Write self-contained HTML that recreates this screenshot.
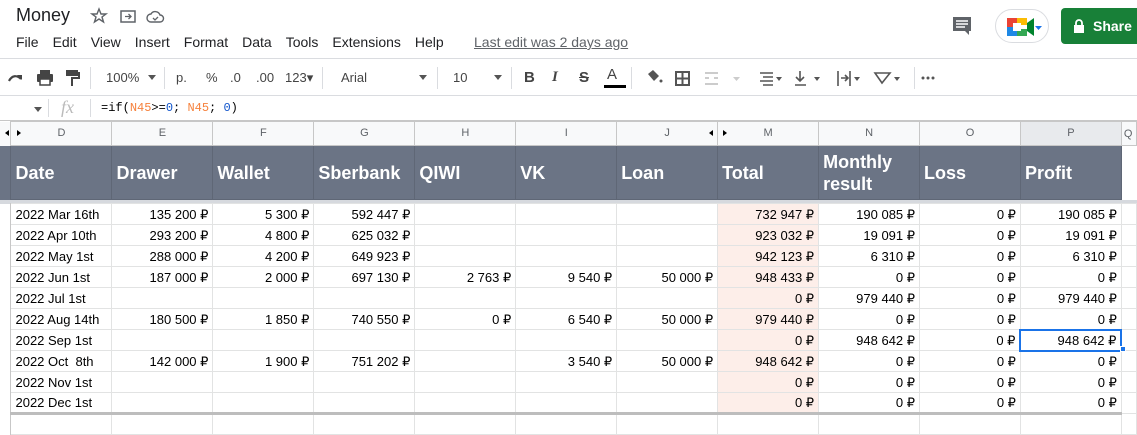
<!DOCTYPE html>
<html><head><meta charset="utf-8"><style>
*{margin:0;padding:0;box-sizing:border-box}
body{width:1137px;height:435px;overflow:hidden;background:#fff;font-family:"Liberation Sans",Arial,sans-serif;position:relative;color:#202124}
.a{position:absolute;white-space:nowrap}
.menu span{margin-right:14px}
.tb{font-size:13px;color:#444}
.sep{position:absolute;width:1px;height:22px;background:#dadce0;top:67px}
table{position:absolute;left:0;top:121px;border-collapse:collapse;table-layout:fixed}
td{border:1px solid #e2e3e3;height:21px;font-size:13px;color:#000;padding:0 4px 1px;overflow:hidden;white-space:nowrap;text-align:right;vertical-align:bottom;line-height:16px}
td.l{text-align:left}
tr.ch td{height:24px;background:#f8f9fa;border-color:#c7c7c7;color:#5f6368;font-size:11px;text-align:center;vertical-align:middle}
tr.hd td{height:54px;background:#6b7485;border-color:#5f6776;color:#fff;font-weight:bold;font-size:18px;text-align:left;padding:0 4px;white-space:normal;line-height:22px;vertical-align:middle}
tr.sp td{height:4px;background:#d6d9de;border:none;padding:0}
td.t{background:#fdeee9}
td.rh{border:none;border-right:1px solid #c7c7c7;padding:0;background:#fff}
tr.ch td.rh{background:#f8f9fa}
tr.last td{border-bottom:3px solid #bdbdbd}
</style></head><body>
<div class="a" style="left:16px;top:5px;font-size:18px;color:#202124">Money</div>
<svg class="a" style="left:90px;top:7px" width="80" height="18" viewBox="0 0 80 18"><path d="M9 2l2 5h5l-4 3 1.5 5L9 12l-4.5 3L6 10 2 7h5z" fill="none" stroke="#5f6368" stroke-width="1.4"/><rect x="31" y="4" width="14" height="11" fill="none" stroke="#5f6368" stroke-width="1.5"/><path d="M35 9.5h6M38.5 7l2.5 2.5-2.5 2.5" stroke="#5f6368" fill="none" stroke-width="1.3"/><path d="M61 15a4 4 0 0 1 0-8 5 5 0 0 1 9 1 3.5 3.5 0 0 1 0 7z" fill="none" stroke="#5f6368" stroke-width="1.4"/><path d="M63 11l2 2 3-3" stroke="#5f6368" fill="none" stroke-width="1.3"/></svg>
<div class="a menu" style="left:16px;top:34px;font-size:14px;color:#202124"><span>File</span><span>Edit</span><span>View</span><span>Insert</span><span>Format</span><span>Data</span><span>Tools</span><span>Extensions</span><span>Help</span></div>
<div class="a" style="left:474px;top:34px;font-size:14px;color:#5f6368;text-decoration:underline">Last edit was 2 days ago</div>
<svg class="a" style="left:951px;top:15px" width="22" height="22"><path d="M2 2h18v14h-2v4l-4-4H2z" fill="#5f6368"/><path d="M5 6h12M5 9h12M5 12h9" stroke="#fff" stroke-width="1.4"/></svg>
<div class="a" style="left:995px;top:9px;width:54px;height:34px;border:1px solid #dadce0;border-radius:17px"></div>
<svg class="a" style="left:1005px;top:16px" width="40" height="22"><rect x="2" y="2" width="10" height="9" fill="#ea4335"/><rect x="2" y="11" width="10" height="9" fill="#1e88e5"/><rect x="12" y="2" width="10" height="7" fill="#fbbc04"/><rect x="12" y="13" width="10" height="7" fill="#34a853"/><rect x="8" y="7" width="8" height="8" fill="#fff"/><path d="M22 7l7-5v18l-7-5z" fill="#00832d"/><path d="M30 10h7l-3.5 4z" fill="#1a73e8"/></svg>
<div class="a" style="left:1061px;top:8px;width:90px;height:36px;background:#188038;border-radius:4px;color:#fff;font-weight:bold;font-size:14px;line-height:36px;padding-left:32px">Share</div>
<svg class="a" style="left:1073px;top:19px" width="12" height="14"><rect x="1" y="6" width="10" height="8" fill="#fff"/><path d="M3 6V4a3 3 0 0 1 6 0v2" stroke="#fff" stroke-width="1.8" fill="none"/></svg>
<div class="a" style="left:0;top:58px;width:1137px;height:1px;background:#dadce0"></div>
<svg class="a" style="left:6px;top:68px" width="74" height="20"><path d="M3 13c3-6 8-6 12-2" fill="none" stroke="#444" stroke-width="2.2"/><path d="M11 7h5v5z" fill="#444"/><rect x="31" y="6" width="16" height="8" rx="1" fill="#444"/><rect x="34" y="2" width="10" height="4" fill="#444"/><rect x="34" y="11" width="10" height="6" fill="#fff" stroke="#444" stroke-width="1.5"/><rect x="60" y="2" width="12" height="6" fill="#444"/><path d="M72 5h1v5h-7v8" stroke="#444" stroke-width="2" fill="none"/></svg>
<div class="sep" style="left:90px"></div>
<div class="a tb" style="left:106px;top:70px">100%</div><div class="a" style="left:148px;top:75px;border:4px solid transparent;border-top:5px solid #555"></div>
<div class="sep" style="left:164px"></div>
<div class="a tb" style="left:176px;top:70px">p.</div>
<div class="a tb" style="left:206px;top:70px">%</div>
<div class="a tb" style="left:230px;top:70px">.0</div>
<div class="a tb" style="left:256px;top:70px">.00</div>
<div class="a tb" style="left:285px;top:70px">123▾</div>
<div class="sep" style="left:322px"></div>
<div class="a tb" style="left:341px;top:70px">Arial</div><div class="a" style="left:419px;top:75px;border:4px solid transparent;border-top:5px solid #555"></div>
<div class="sep" style="left:437px"></div>
<div class="a tb" style="left:453px;top:70px">10</div><div class="a" style="left:494px;top:75px;border:4px solid transparent;border-top:5px solid #555"></div>
<div class="sep" style="left:511px"></div>
<div class="a" style="left:524px;top:69px;font-size:15px;font-weight:bold;color:#444">B</div>
<div class="a" style="left:552px;top:69px;font-size:15px;font-style:italic;font-weight:bold;color:#444;font-family:'Liberation Serif',serif">I</div>
<div class="a" style="left:579px;top:69px;font-size:15px;font-weight:bold;color:#444;text-decoration:line-through">S</div>
<div class="a" style="left:607px;top:66px;font-size:15px;color:#444">A</div>
<div class="a" style="left:604px;top:85px;width:22px;height:3px;background:#000"></div>
<div class="sep" style="left:631px"></div>
<svg class="a" style="left:645px;top:68px" width="290" height="20"><path d="M3 6l5-4 6 6-5 5z" fill="#555"/><circle cx="16" cy="13" r="1.5" fill="#555"/><rect x="31" y="4" width="13" height="13" fill="none" stroke="#555" stroke-width="2"/><path d="M37.5 4v13M31 10.5h13" stroke="#555" stroke-width="2"/><path d="M60 5h13M60 16h13M60 10h4M69 10h4" stroke="#ccc" stroke-width="2"/><path d="M88 9h7l-3.5 4z" fill="#ccc"/><path d="M115 5h13M118 9h10M115 13h13M118 17h10" stroke="#555" stroke-width="1.6"/><path d="M131 9h6l-3 4z" fill="#555"/><path d="M155 3v10M151 9l4 4 4-4M150 17h11" stroke="#555" stroke-width="1.6" fill="none"/><path d="M169 9h6l-3 4z" fill="#555"/><path d="M193 3v15M205 3v15M196 10h7M200 7l3 3-3 3" stroke="#555" stroke-width="1.6" fill="none"/><path d="M209 9h6l-3 4z" fill="#555"/><path d="M230 5l7 10 8-10z" stroke="#555" stroke-width="1.6" fill="none"/><path d="M249 9h6l-3 4z" fill="#555"/><circle cx="283" cy="10" r="1.5" fill="#555"/><circle cx="288" cy="10" r="1.5" fill="#555"/><circle cx="278" cy="10" r="1.5" fill="#555"/></svg>
<div class="sep" style="left:914px"></div>
<div class="a" style="left:0;top:95px;width:1137px;height:1px;background:#dadce0"></div>
<div class="a" style="left:34px;top:107px;border:4px solid transparent;border-top:5px solid #555"></div>
<div class="a" style="left:48px;top:99px;width:1px;height:18px;background:#dadce0"></div>
<div class="a" style="left:61px;top:97px;font-size:18px;font-style:italic;color:#bbb;font-family:'Liberation Serif',serif">fx</div>
<div class="a" style="left:90px;top:99px;width:1px;height:18px;background:#dadce0"></div>
<div class="a" style="left:101px;top:101px;font-size:12px;font-family:'Liberation Mono',monospace;color:#000">=if(<span style="color:#f6813c">N45</span>&gt;=<span style="color:#1155cc">0</span>; <span style="color:#f6813c">N45</span>; <span style="color:#1155cc">0</span>)</div>
<div class="a" style="left:0;top:120px;width:1137px;height:1px;background:#c7c7c7"></div>
<table>
<colgroup><col style="width:11px"><col style="width:101px"><col style="width:101px"><col style="width:101px"><col style="width:101px"><col style="width:101px"><col style="width:101px"><col style="width:101px"><col style="width:101px"><col style="width:101px"><col style="width:101px"><col style="width:101px"><col style="width:15px"></colgroup>
<tr class="ch"><td class="rh"></td><td>D</td><td>E</td><td>F</td><td>G</td><td>H</td><td>I</td><td>J</td><td>M</td><td>N</td><td>O</td><td style="background:#e8eaed">P</td><td style="text-align:left;padding:0 2px">Q</td></tr>
<tr class="hd"><td class="rh"></td><td>Date</td><td>Drawer</td><td>Wallet</td><td>Sberbank</td><td>QIWI</td><td>VK</td><td>Loan</td><td>Total</td><td>Monthly result</td><td>Loss</td><td>Profit</td><td style="background:#fff;border:none"></td></tr>
<tr class="sp"><td class="rh" style="height:4px"></td><td colspan="12"></td></tr>
<tr><td class="rh"></td><td class="l">2022 Mar 16th</td><td>135 200 ₽</td><td>5 300 ₽</td><td>592 447 ₽</td><td></td><td></td><td></td><td class="t">732 947 ₽</td><td>190 085 ₽</td><td>0 ₽</td><td>190 085 ₽</td><td></td></tr>
<tr><td class="rh"></td><td class="l">2022 Apr 10th</td><td>293 200 ₽</td><td>4 800 ₽</td><td>625 032 ₽</td><td></td><td></td><td></td><td class="t">923 032 ₽</td><td>19 091 ₽</td><td>0 ₽</td><td>19 091 ₽</td><td></td></tr>
<tr><td class="rh"></td><td class="l">2022 May 1st</td><td>288 000 ₽</td><td>4 200 ₽</td><td>649 923 ₽</td><td></td><td></td><td></td><td class="t">942 123 ₽</td><td>6 310 ₽</td><td>0 ₽</td><td>6 310 ₽</td><td></td></tr>
<tr><td class="rh"></td><td class="l">2022 Jun 1st</td><td>187 000 ₽</td><td>2 000 ₽</td><td>697 130 ₽</td><td>2 763 ₽</td><td>9 540 ₽</td><td>50 000 ₽</td><td class="t">948 433 ₽</td><td>0 ₽</td><td>0 ₽</td><td>0 ₽</td><td></td></tr>
<tr><td class="rh"></td><td class="l">2022 Jul 1st</td><td></td><td></td><td></td><td></td><td></td><td></td><td class="t">0 ₽</td><td>979 440 ₽</td><td>0 ₽</td><td>979 440 ₽</td><td></td></tr>
<tr><td class="rh"></td><td class="l">2022 Aug 14th</td><td>180 500 ₽</td><td>1 850 ₽</td><td>740 550 ₽</td><td>0 ₽</td><td>6 540 ₽</td><td>50 000 ₽</td><td class="t">979 440 ₽</td><td>0 ₽</td><td>0 ₽</td><td>0 ₽</td><td></td></tr>
<tr><td class="rh"></td><td class="l">2022 Sep 1st</td><td></td><td></td><td></td><td></td><td></td><td></td><td class="t">0 ₽</td><td>948 642 ₽</td><td>0 ₽</td><td style="border:2px solid #1a73e8">948 642 ₽</td><td></td></tr>
<tr><td class="rh"></td><td class="l">2022 Oct &nbsp;8th</td><td>142 000 ₽</td><td>1 900 ₽</td><td>751 202 ₽</td><td></td><td>3 540 ₽</td><td>50 000 ₽</td><td class="t">948 642 ₽</td><td>0 ₽</td><td>0 ₽</td><td>0 ₽</td><td></td></tr>
<tr><td class="rh"></td><td class="l">2022 Nov 1st</td><td></td><td></td><td></td><td></td><td></td><td></td><td class="t">0 ₽</td><td>0 ₽</td><td>0 ₽</td><td>0 ₽</td><td></td></tr>
<tr class="last"><td class="rh" style="border-bottom:none"></td><td class="l">2022 Dec 1st</td><td></td><td></td><td></td><td></td><td></td><td></td><td class="t">0 ₽</td><td>0 ₽</td><td>0 ₽</td><td>0 ₽</td><td style="border-bottom:1px solid #e2e3e3"></td></tr>
<tr><td class="rh"></td><td></td><td></td><td></td><td></td><td></td><td></td><td></td><td></td><td></td><td></td><td></td><td></td></tr>
</table>
<div class="a" style="left:1120px;top:346px;width:6px;height:6px;background:#1a73e8;border:1px solid #fff"></div>
<div class="a" style="left:2px;top:130px;border:3px solid transparent;border-right:4px solid #000"></div>
<div class="a" style="left:17px;top:130px;border:3px solid transparent;border-left:4px solid #000"></div>
<div class="a" style="left:706px;top:130px;border:3px solid transparent;border-right:4px solid #000"></div>
<div class="a" style="left:723px;top:130px;border:3px solid transparent;border-left:4px solid #000"></div>
</body></html>
